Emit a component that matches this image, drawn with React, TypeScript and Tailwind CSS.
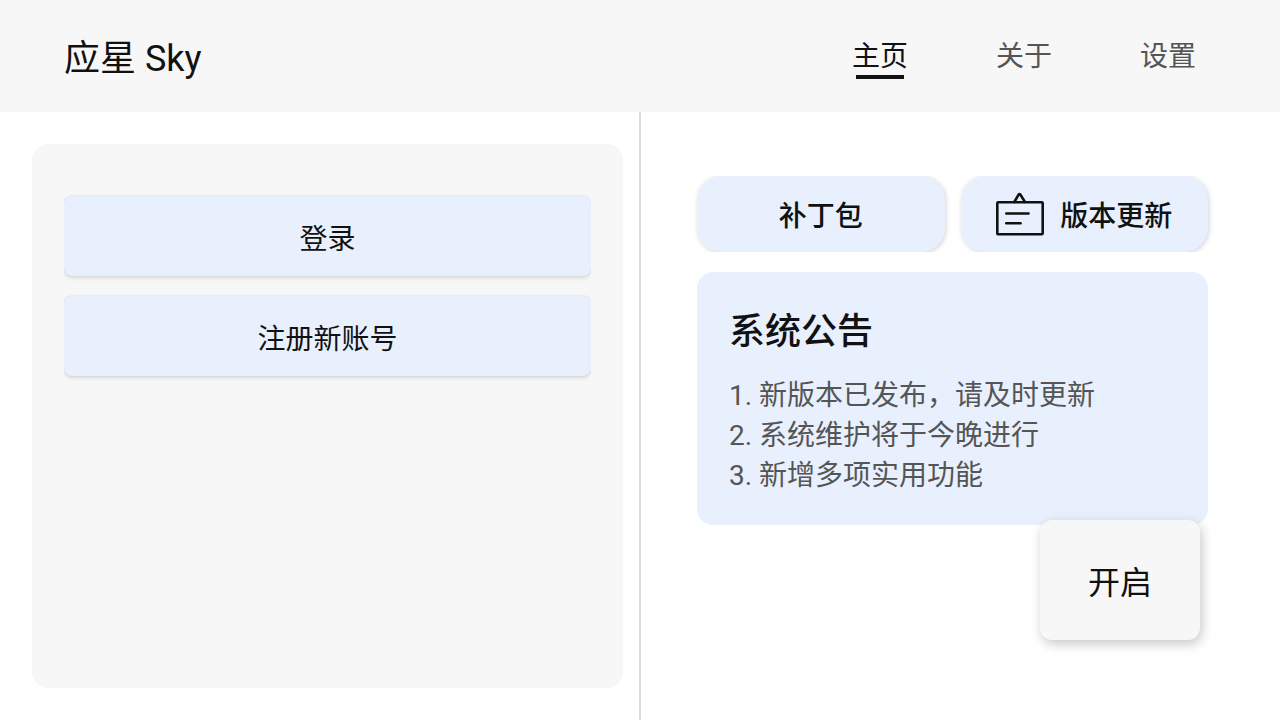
import React, { useState } from 'react';

const NAV_ITEMS = ['主页', '关于', '设置'];

const NOTICES = [
    '1. 新版本已发布，请及时更新',
    '2. 系统维护将于今晚进行',
    '3. 新增多项实用功能',
];

function BoardIcon() {
    return (
        <svg
            className="w-12 h-12 shrink-0"
            viewBox="0 0 48 48"
            fill="none"
            stroke="currentColor"
            strokeWidth="2.6"
            strokeLinecap="round"
            strokeLinejoin="round"
            aria-hidden="true"
        >
            <rect x="1.3" y="12.3" width="45.4" height="32" rx="1" />
            <path d="M18.3 12 L22.6 4.6 Q23.5 3.4 24.4 4.6 L29 12" />
            <path d="M10.3 23.5 H32.5" />
            <path d="M10.3 33.3 H24.5" />
        </svg>
    );
}

function AccountButton({ children }: { children: React.ReactNode }) {
    return (
        <button
            type="button"
            className="w-full h-20 pt-2 rounded-lg bg-[#e8f0fe] text-[28px] leading-10 text-[#111111] shadow-[0_2px_4px_rgba(0,0,0,0.12),0_0_2px_rgba(0,0,0,0.12)]"
        >
            {children}
        </button>
    );
}

function ActionButton({ icon, children }: { icon?: React.ReactNode; children: React.ReactNode }) {
    return (
        <button
            type="button"
            className="flex-1 flex items-center justify-center gap-4 rounded-3xl bg-[#e8f0fe] text-[28px] leading-10 font-medium text-[#111111] shadow-[1px_1px_5px_rgba(0,0,0,0.18)]"
        >
            {icon}
            <span className="pt-1.5">{children}</span>
        </button>
    );
}

export default function App() {
    const [active, setActive] = useState(NAV_ITEMS[0]);

    return (
        <div className="relative min-h-screen flex flex-col bg-white font-[Roboto,'Noto_Sans_CJK_SC',sans-serif]">
            <header className="h-28 shrink-0 flex items-center justify-between pl-16 pr-10 bg-[#f7f7f7]">
                <h1 className="pt-1.5 text-4xl text-[#111111]">应星 Sky</h1>
                <nav className="flex">
                    {NAV_ITEMS.map((item) => (
                        <button
                            key={item}
                            type="button"
                            onClick={() => setActive(item)}
                            className={`w-36 pt-1.5 flex flex-col items-center text-[28px] leading-9 ${item === active ? 'text-[#111111]' : 'text-[#555555]'}`}
                        >
                            {item}
                            <span className={`w-12 h-1 ${item === active ? 'bg-[#111111]' : 'bg-transparent'}`} />
                        </button>
                    ))}
                </nav>
            </header>

            <main className="flex-1 grid grid-cols-[1fr_2px_1fr]">
                <section className="flex py-8 pl-8 pr-4">
                    <div className="flex-1 rounded-2xl bg-[#f7f7f7] px-8 py-8">
                        {/* side shadows are cut off at the list edge */}
                        <div className="flex flex-col gap-5 py-5 overflow-x-clip">
                            <AccountButton>登录</AccountButton>
                            <AccountButton>注册新账号</AccountButton>
                        </div>
                    </div>
                </section>

                <div className="bg-[#dddddd]" />

                <section className="pt-16 pl-14 pr-18">
                    <div className="h-19 flex gap-4 overflow-y-clip">
                        <ActionButton>补丁包</ActionButton>
                        <ActionButton icon={<BoardIcon />}>版本更新</ActionButton>
                    </div>

                    <div className="mt-5 px-8 pt-9 pb-[29px] rounded-2xl bg-[#e8f0fe]">
                        <h2 className="mb-5 text-4xl leading-12 font-medium text-[#111111]">系统公告</h2>
                        <ul className="text-[28px] leading-10 text-[#555555]">
                            {NOTICES.map((notice) => (
                                <li key={notice}>{notice}</li>
                            ))}
                        </ul>
                    </div>
                </section>
            </main>

            {/* Floating start button */}
            <button
                type="button"
                className="absolute right-20 bottom-20 w-40 h-30 pt-1.5 rounded-xl bg-[#f7f7f7] text-[32px] text-[#111111] shadow-[2px_4px_12px_rgba(0,0,0,0.22)]"
            >
                开启
            </button>
        </div>
    );
}
